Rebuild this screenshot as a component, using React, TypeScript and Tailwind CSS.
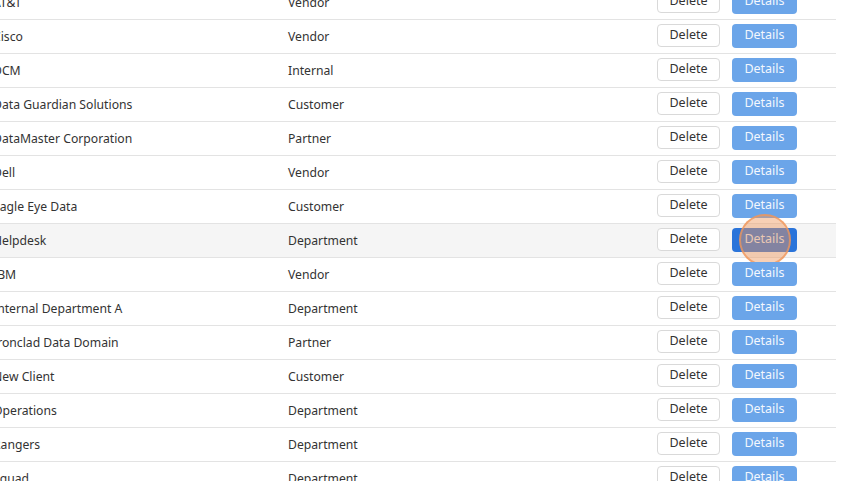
import React from "react";

const rows: [string, string][] = [
  ["AT&T", "Vendor"],
  ["Cisco", "Vendor"],
  ["DCM", "Internal"],
  ["Data Guardian Solutions", "Customer"],
  ["DataMaster Corporation", "Partner"],
  ["Dell", "Vendor"],
  ["Eagle Eye Data", "Customer"],
  ["Helpdesk", "Department"],
  ["IBM", "Vendor"],
  ["Internal Department A", "Department"],
  ["Ironclad Data Domain", "Partner"],
  ["New Client", "Customer"],
  ["Operations", "Department"],
  ["Rangers", "Department"],
  ["Squad", "Department"],
];

export default function App() {
  return (
    <div
      className="w-[860px] h-[481px] overflow-hidden bg-white text-[12.2px] text-[#333]"
      style={{ fontFamily: '"Noto Sans", "Open Sans", sans-serif' }}
    >
      <div className="-ml-[15px] -mt-[14px] w-[851px]">
        {rows.map(([name, type]) => {
          const hovered = name === "Helpdesk";
          return (
            <div
              key={name}
              className={`flex items-center h-[34px] border-b border-[#e3e3e3] ${hovered ? "bg-[#f5f5f5]" : "bg-white"}`}
            >
              <div className="w-[295px] px-2 pt-[2px] whitespace-nowrap">{name}</div>
              <div className="w-[200px] px-2 pt-[2px] whitespace-nowrap">{type}</div>
              <div className="flex-1 flex justify-end items-center gap-[12px] pr-[39px] -mt-[2px]">
                <button className="h-[23px] w-[63px] rounded-[4px] border border-[#d9d9d9] bg-white text-[12.5px] text-[#333] leading-none">
                  Delete
                </button>
                <div className="relative">
                  <button
                    className={`h-[24px] w-[65px] rounded-[4px] text-[12.5px] leading-none ${hovered ? "bg-[#2a74da] text-[#e8eefa]" : "bg-[#6ba5e9] text-[#f3f7fd]"}`}
                  >
                    Details
                  </button>
                  {hovered && (
                    <div className="absolute left-1/2 top-1/2 -translate-x-1/2 -translate-y-1/2 w-[52px] h-[52px] rounded-full border-2 border-[rgba(240,150,90,0.75)] bg-[rgba(240,150,90,0.45)] pointer-events-none" />
                  )}
                </div>
              </div>
            </div>
          );
        })}
      </div>
    </div>
  );
}
